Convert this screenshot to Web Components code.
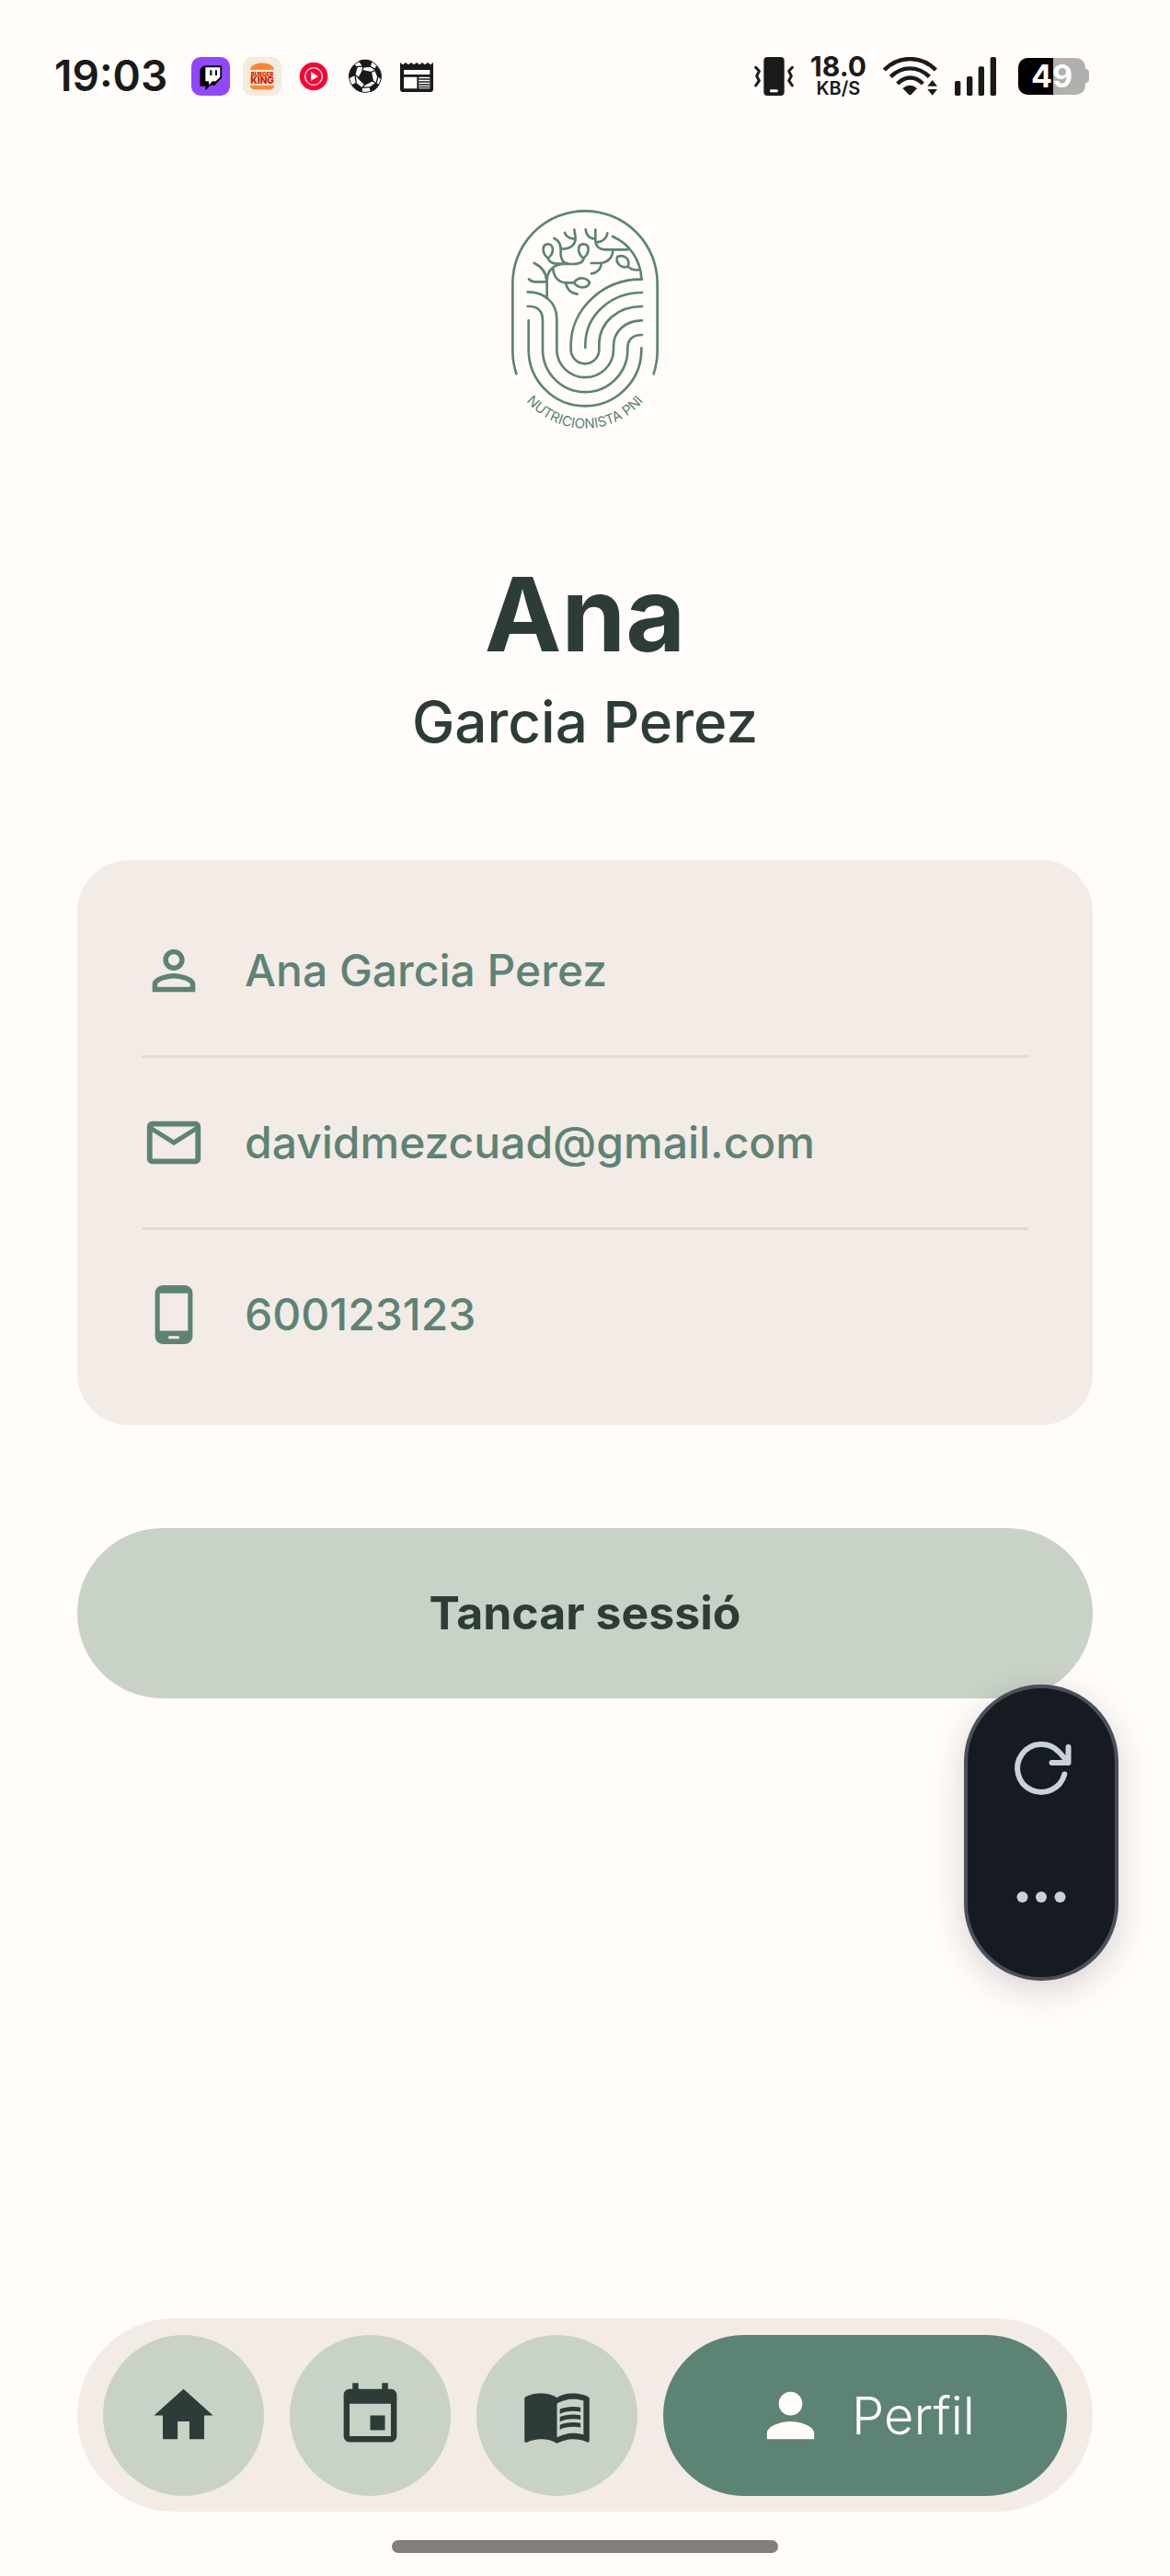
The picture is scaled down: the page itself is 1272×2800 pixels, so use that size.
<!DOCTYPE html>
<html lang="ca">
<head>
<meta charset="utf-8">
<meta name="viewport" content="width=device-width, initial-scale=1">
<title>Perfil</title>
<style>
	:root {
		--paper: #fffcf9;
		--card: #f3ebe6;
		--line: #e6dad1;
		--sage: #c8d2c6;
		--green: #5d8375;
		--dark: #2d3c37;
		--ink: #1a1a1a;
	}
	body {
		margin: 0;
		background: var(--paper);
		color: var(--dark);
		font-family: Inter, "Open Sans", sans-serif;
	}
</style>
</head>
<body>

<app-screen>
	<status-bar slot="status" time="19:03" speed="18.0" unit="KB/S" battery="49"></status-bar>
	<brand-logo></brand-logo>
	<profile-name>
		<span slot="first">Ana</span>
		<span slot="last">Garcia Perez</span>
	</profile-name>
	<info-card>
		<info-row icon="personOutline">Ana Garcia Perez</info-row>
		<info-row icon="mail">davidmezcuad@gmail.com</info-row>
		<info-row icon="phone">600123123</info-row>
	</info-card>
	<pill-button>Tancar sessió</pill-button>
	<nav-bar slot="nav">
		<nav-item icon="home" label="Inici" href="#inici"></nav-item>
		<nav-item icon="event" label="Calendari" href="#calendari"></nav-item>
		<nav-item icon="book" label="Receptes" href="#receptes"></nav-item>
		<nav-item icon="person" label="Perfil" href="#perfil" active>Perfil</nav-item>
	</nav-bar>
	<floating-tools slot="overlay"></floating-tools>
</app-screen>

<script>
/*24x24 icon paths*/
const ICONS = {
	personOutline: 'M12 5.9c1.16 0 2.1.94 2.1 2.1s-.94 2.1-2.1 2.1S9.9 9.16 9.9 8s.94-2.1 2.1-2.1m0 9c2.97 0 6.1 1.46 6.1 2.1v1.1H5.9V17c0-.64 3.13-2.1 6.1-2.1M12 4C9.79 4 8 5.79 8 8s1.79 4 4 4 4-1.79 4-4-1.79-4-4-4zm0 9c-2.67 0-8 1.34-8 4v3h16v-3c0-2.66-5.33-4-8-4z',
	mail: 'M22 6c0-1.1-.9-2-2-2H4c-1.1 0-2 .9-2 2v12c0 1.1.9 2 2 2h16c1.1 0 2-.9 2-2V6zm-2 0l-8 5-8-5h16zm0 12H4V8l8 5 8-5v10z',
	phone: 'M16 1H8C6.34 1 5 2.34 5 4v16c0 1.66 1.34 3 3 3h8c1.66 0 3-1.34 3-3V4c0-1.66-1.34-3-3-3zm-2 20h-4v-1h4v1zm3.25-3H6.75V4h10.5v14z',
	home: 'M10 20v-6h4v6h5v-8h3L12 3 2 12h3v8z',
	event: 'M17 12h-5v5h5v-5zM16 1v2H8V1H6v2H5c-1.11 0-1.99.9-1.99 2L3 19c0 1.1.89 2 2 2h14c1.1 0 2-.9 2-2V5c0-1.1-.9-2-2-2h-1V1h-2zm3 18H5V8h14v11z',
	book: 'M21 5c-1.11-.35-2.33-.5-3.5-.5-1.95 0-4.05.4-5.5 1.5-1.45-1.1-3.55-1.5-5.5-1.5S2.45 4.9 1 6v14.65c0 .25.25.5.5.5.1 0 .15-.05.25-.05C3.1 20.45 5.05 20 6.5 20c1.95 0 4.05.4 5.5 1.5 1.35-.85 3.8-1.5 5.5-1.5 1.65 0 3.35.3 4.75 1.05.1.05.15.05.25.05.25 0 .5-.25.5-.5V6c-.6-.45-1.25-.75-2-1zm0 13.5c-1.1-.35-2.3-.5-3.5-.5-1.7 0-4.15.65-5.5 1.5V8c1.35-.85 3.8-1.5 5.5-1.5 1.2 0 2.4.15 3.5.5v11.5zM17.5 10.5c.88 0 1.73.09 2.5.26V9.24c-.79-.15-1.64-.24-2.5-.24-1.7 0-3.24.29-4.5.83v1.66c1.13-.64 2.7-.99 4.5-.99zM13 12.49v1.66c1.13-.64 2.7-.99 4.5-.99.88 0 1.73.09 2.5.26V11.9c-.79-.15-1.64-.24-2.5-.24-1.7 0-3.24.3-4.5.83zM17.5 14.33c-1.7 0-3.24.29-4.5.83v1.66c1.13-.64 2.7-.99 4.5-.99.88 0 1.73.09 2.5.26v-1.52c-.79-.16-1.64-.24-2.5-.24z',
	person: 'M12 12c2.21 0 4-1.79 4-4s-1.79-4-4-4-4 1.79-4 4 1.79 4 4 4zm0 2c-2.67 0-8 1.34-8 4v2h16v-2c0-2.66-5.33-4-8-4z'
};

function icon(name){
	return `<svg viewBox="0 0 24 24" fill="currentColor" aria-hidden="true"><path d="${ICONS[name]}"/></svg>`;
}

/*base class, opens the root and fills it with the markup of the element*/
class BaseElement extends HTMLElement {
	constructor() {
		super();
		this._root = this.attachShadow({mode: 'open'});
	}
	connectedCallback() {
		this._root.innerHTML = this.render();
	}
}

class AppScreen extends BaseElement {
	render() {
		return `
			<style>
				:host {
					display: flex;
					flex-direction: column;
					position: relative;
					min-height: 100vh;
					box-sizing: border-box;
					padding-bottom: 25px;
				}
				main {
					display: flex;
					flex-direction: column;
					padding: 111px 84px 56px;
				}
				footer {
					margin-top: auto;
					padding: 0 84px;
				}
				.handle {
					width: 38%;
					max-width: 420px;
					height: 14px;
					margin: 31px auto 0;
					border-radius: 7px;
					background: #807f7d;
				}
			</style>
			<slot name="status"></slot>
			<main><slot></slot></main>
			<footer>
				<slot name="nav"></slot>
				<div class="handle"></div>
			</footer>
			<slot name="overlay"></slot>
		`;
	}
}

class StatusBar extends BaseElement {
	render() {
		return `
			<style>
				:host {
					display: flex;
					align-items: center;
					justify-content: space-between;
					padding: 61px 88px 0 59px;
					color: var(--ink);
				}
				.group { display: flex; align-items: center; height: 43px; }
				.apps { gap: 14px; }
				.system { gap: 18px; }
				time { font-size: 46px; font-weight: 600; line-height: 43px; margin-right: 12px; }
				svg { display: block; flex: none; }
				.speed { display: flex; flex-direction: column; align-items: center; font-weight: 700; }
				.speed b { font-size: 30px; line-height: 26px; font-weight: 700; }
				.speed small { font-size: 20px; line-height: 22px; font-weight: 600; }
				.battery { display: flex; align-items: center; margin-left: 6px; }
				.level {
					width: 73px;
					height: 40px;
					border-radius: 10px;
					background: linear-gradient(90deg, #000 52%, #b1b0ae 52%);
					color: #fff;
					font-size: 34px;
					font-weight: 700;
					line-height: 40px;
					text-align: center;
				}
				.nub { width: 4px; height: 15px; border-radius: 0 4px 4px 0; background: #b1b0ae; }
			</style>
			<div class="group apps">
				<time>${this.getAttribute('time')}</time>
				<svg width="42" height="42" viewBox="0 0 126 126">
					<rect width="126" height="126" rx="30" fill="#9147ff"/>
					<path d="M28 40L41 28H99V68L76 92H62L46 109V95H28Z" fill="#000"/>
					<path d="M46 34H94V65L80 79H69L57 91V79H46Z" fill="#fff"/>
					<path d="M61 43h6v17h-6zM78 43h6v17h-6z" fill="#000"/>
				</svg>
				<svg width="42" height="42" viewBox="0 0 126 126">
					<rect width="126" height="126" rx="30" fill="#f5ebdc"/>
					<path d="M24 42C24 12 102 12 102 42Z" fill="#ff8732"/>
					<path d="M24 92H102C102 110 84 106 63 106S24 110 24 92Z" fill="#ff8732"/>
					<g fill="#d62300" font-weight="900" text-anchor="middle">
						<text x="63" y="62" font-size="18">BURGER</text>
						<text x="63" y="88" font-size="30">KING</text>
					</g>
				</svg>
				<svg width="42" height="42" viewBox="0 0 126 126">
					<rect width="126" height="126" rx="30" fill="#fff"/>
					<circle cx="63" cy="63" r="46" fill="#ff0033"/>
					<circle cx="63" cy="63" r="28" fill="none" stroke="#fff" stroke-width="4"/>
					<path d="M54 48L78 63L54 78Z" fill="#fff"/>
				</svg>
				<svg width="42" height="42" viewBox="0 0 126 126">
					<circle cx="63" cy="63" r="52" fill="#fffcf9" stroke="#1a1a1a" stroke-width="3"/>
					<g fill="#1a1a1a">
						<path d="M54 42L84 48L90 78L62 92L39 70Z"/>
						<path d="M42 13C56 7 74 7 86 14L80 32L56 35Z"/>
						<path d="M99 28C112 42 118 56 115 72L102 64L93 42Z"/>
						<path d="M109 89C101 104 92 110 80 114L77 98L96 84Z"/>
						<path d="M53 115C38 111 27 104 18 90L34 84L54 100Z"/>
						<path d="M9 70C8 52 16 36 28 24L38 33L31 60Z"/>
					</g>
					<path d="M54 44L56 31M82 50L97 42M78 30L97 41M86 76L99 87M105 62L99 87M62 88L54 100M80 98L52 100M42 68L30 58M30 58L34 87M34 31L56 31" stroke="#1a1a1a" stroke-width="4"/>
				</svg>
				<svg width="42" height="42" viewBox="0 0 126 126">
					<path d="M9 18l9 7 9-7 9 7 9-7 9 7 9-7 9 7 9-7 9 7 9-7 9 7 9-7V104a10 10 0 0 1-10 10H19a10 10 0 0 1-10-10Z" fill="#1a1a1a"/>
					<path d="M21 42H106V57H21ZM21 65H64V103H21ZM70 65H106V103H70Z" fill="#fffcf9"/>
					<path d="M70 72H106M70 81H106M70 90H106M70 98H106" stroke="#1a1a1a" stroke-width="4"/>
				</svg>
			</div>
			<div class="group system">
				<svg width="43" height="42" viewBox="0 0 129 126">
					<rect x="31" y="0" width="67" height="126" rx="12" fill="#1a1a1a"/>
					<rect x="51" y="106" width="26" height="9" rx="3" fill="#fffcf9"/>
					<path d="M5 34L16 46L8 62L16 77L5 93M124 34L113 46L121 62L113 77L124 93" fill="none" stroke="#1a1a1a" stroke-width="9" stroke-linecap="round" stroke-linejoin="round"/>
				</svg>
				<div class="speed">
					<b>${this.getAttribute('speed')}</b>
					<small>${this.getAttribute('unit')}</small>
				</div>
				<svg width="60" height="42" viewBox="0 0 180 126">
					<g fill="none" stroke="#1a1a1a" stroke-width="13">
						<path d="M4 42C52 -6 124 -6 172 42"/>
						<path d="M25 64C62 28 114 28 151 64"/>
						<path d="M47 87C73 61 105 61 130 87"/>
					</g>
					<path d="M64 102Q88 82 111 102L92 122Q88 126 84 122Z" fill="#1a1a1a"/>
					<path d="M145 95L161 75L177 95ZM145 105H177L161 125Z" fill="#1a1a1a"/>
				</svg>
				<svg width="45" height="42" viewBox="0 0 135 126" fill="#1a1a1a">
					<rect x="0" y="78" width="19" height="48" rx="5"/>
					<rect x="39" y="63" width="19" height="63" rx="5"/>
					<rect x="77" y="31" width="19" height="95" rx="5"/>
					<rect x="116" y="0" width="19" height="126" rx="5"/>
				</svg>
				<div class="battery">
					<div class="level">${this.getAttribute('battery')}</div>
					<div class="nub"></div>
				</div>
			</div>
		`;
	}
}

class BrandLogo extends BaseElement {
	render() {
		return `
			<style>
				:host { display: block; color: var(--green); }
				svg { display: block; margin: 0 auto; }
			</style>
			<svg width="190" height="260" viewBox="3 0 570 780" fill="none" stroke="currentColor" stroke-width="8" stroke-linecap="round" stroke-linejoin="round">
				<path d="M64 574Q52 535 52 500V279A236 236 0 0 1 524 279V500Q524 535 512 574"/>
				<path d="M104 400V495A184 184 0 0 0 472 495V490"/>
				<path d="M101 354H108Q150 356 150 400V495A138 138 0 0 0 427 495V490Q428 447 474 447"/>
				<path d="M101 307C154 307 196 340 196 395V495A92 90 0 0 0 381 495V484C381 435 420 400 474 400"/>
				<path d="M474 266C345 264 242 365 242 480V495A46 46 0 0 0 334 495V475C336 405 395 354 474 354"/>
				<path d="M289 489V478C290 380 375 309 474 309"/>
				<path d="M164 328V268C164 238 186 216 222 216H248C272 216 283 208 283 196"/>
				<path d="M283 197C262 180 262 151 283 151S304 180 283 197Z"/>
				<path d="M167 197C146 180 148 151 167 151S190 180 167 197Q174 215 198 215H232"/>
				<path d="M122 213Q160 230 163 270M105 265Q112 274 128 274H162"/>
				<path d="M187 132Q209 142 209 168V186Q211 212 232 215"/>
				<path d="M212 167C244 167 258 150 257 130L253 104M222 114Q230 134 256 134"/>
				<path d="M184 232C186 260 204 277 228 277H252C266 255 296 260 303 277C296 297 266 297 252 277M225 279Q232 310 263 314"/>
				<path d="M290 103Q294 134 322 134M322 104V138C322 158 336 169 356 169H428M361 115Q357 142 326 145"/>
				<path d="M378 126C434 150 470 205 472 264"/>
				<path d="M308 213H334C362 213 378 195 379 171M309 247Q336 244 342 215"/>
				<path d="M428 224C404 232 386 210 394 192C418 182 436 202 428 224ZM428 224Q442 238 462 235"/>
				<path id="arc" d="M39 503A249 249 0 0 0 537 503" stroke="none"/>
				<text fill="currentColor" stroke="none" font-size="45" text-anchor="middle"><textPath href="#arc" startOffset="50%">NUTRICIONISTA PNI</textPath></text>
			</svg>
		`;
	}
}

class ProfileName extends BaseElement {
	render() {
		return `
			<style>
				:host { display: block; text-align: center; margin-top: 126px; }
				h1, p { margin: 0; font-weight: 700; font-size: 112px; line-height: 132px; }
				p { font-weight: 500; font-size: 62px; line-height: 76px; margin-top: 14px; }
			</style>
			<h1><slot name="first"></slot></h1>
			<p><slot name="last"></slot></p>
		`;
	}
}

class InfoCard extends BaseElement {
	render() {
		return `
			<style>
				:host {
					display: block;
					margin-top: 112px;
					padding: 28px 70px;
					border-radius: 56px;
					background: var(--card);
				}
				::slotted(info-row:not(:last-child)) { border-bottom: 3px solid var(--line); }
			</style>
			<slot></slot>
		`;
	}
}

class InfoRow extends BaseElement {
	render() {
		return `
			<style>
				:host {
					display: flex;
					align-items: center;
					gap: 42px;
					padding: 57px 0;
					color: var(--green);
					font-size: 48px;
					font-weight: 500;
					line-height: 56px;
				}
				svg { display: block; flex: none; width: 70px; height: 70px; }
			</style>
			${icon(this.getAttribute('icon'))}
			<span><slot></slot></span>
		`;
	}
}

class PillButton extends BaseElement {
	render() {
		return `
			<style>
				:host { display: block; margin-top: 112px; }
				button {
					display: block;
					width: 100%;
					padding: 60px;
					border: 0;
					border-radius: 93px;
					background: var(--sage);
					color: var(--dark);
					font: 700 50px/65px Inter, sans-serif;
					cursor: pointer;
				}
			</style>
			<button type="button"><slot></slot></button>
		`;
	}
}

class NavBar extends BaseElement {
	render() {
		return `
			<style>
				:host { display: block; }
				nav {
					display: flex;
					gap: 28px;
					padding: 18px 28px 17px;
					border-radius: 105px;
					background: var(--card);
				}
				::slotted([active]) { flex: 1; }
			</style>
			<nav><slot></slot></nav>
		`;
	}
}

class NavItem extends BaseElement {
	render() {
		return `
			<style>
				:host { display: block; }
				a {
					display: flex;
					align-items: center;
					justify-content: center;
					gap: 28px;
					min-width: 175px;
					height: 175px;
					border-radius: 88px;
					background: var(--sage);
					color: var(--dark);
					font-size: 56px;
					font-weight: 300;
					text-decoration: none;
				}
				:host([active]) a { background: var(--green); color: var(--paper); }
				span { display: none; }
				:host([active]) span { display: block; }
				svg { display: block; flex: none; width: 77px; height: 77px; }
			</style>
			<a href="${this.getAttribute('href')}" aria-label="${this.getAttribute('label')}">
				${icon(this.getAttribute('icon'))}
				<span><slot></slot></span>
			</a>
		`;
	}
}

/*tool pill that floats over the page*/
class FloatingTools extends BaseElement {
	render() {
		return `
			<style>
				:host {
					position: absolute;
					top: 1831px;
					right: 56px;
					display: flex;
					flex-direction: column;
					box-sizing: border-box;
					width: 168px;
					padding: 17px 0;
					border: 4px solid #4a505a;
					border-radius: 84px;
					background: #161b22;
					box-shadow: 0 10px 36px rgba(45, 30, 30, .18);
				}
				button {
					display: flex;
					align-items: center;
					justify-content: center;
					height: 140px;
					padding: 0;
					border: 0;
					background: none;
					color: #c9d1d9;
					cursor: pointer;
				}
			</style>
			<button type="button" aria-label="Recarregar">
				<svg width="72" height="72" viewBox="-36 -36 72 72" fill="none" stroke="currentColor" stroke-width="6" stroke-linecap="round" stroke-linejoin="round">
					<path d="M25.3 6.5A26 26 0 1 1 19 -18Q23 -14 29 -6M29.5 -23V-6H11.5"/>
				</svg>
			</button>
			<button type="button" aria-label="Més opcions">
				<svg width="72" height="72" viewBox="-36 -36 72 72" fill="currentColor">
					<circle cx="-20.5" r="6"/><circle r="6"/><circle cx="20.5" r="6"/>
				</svg>
			</button>
		`;
	}
}

customElements.define('app-screen', AppScreen);
customElements.define('status-bar', StatusBar);
customElements.define('brand-logo', BrandLogo);
customElements.define('profile-name', ProfileName);
customElements.define('info-card', InfoCard);
customElements.define('info-row', InfoRow);
customElements.define('pill-button', PillButton);
customElements.define('nav-bar', NavBar);
customElements.define('nav-item', NavItem);
customElements.define('floating-tools', FloatingTools);
</script>
</body>
</html>
